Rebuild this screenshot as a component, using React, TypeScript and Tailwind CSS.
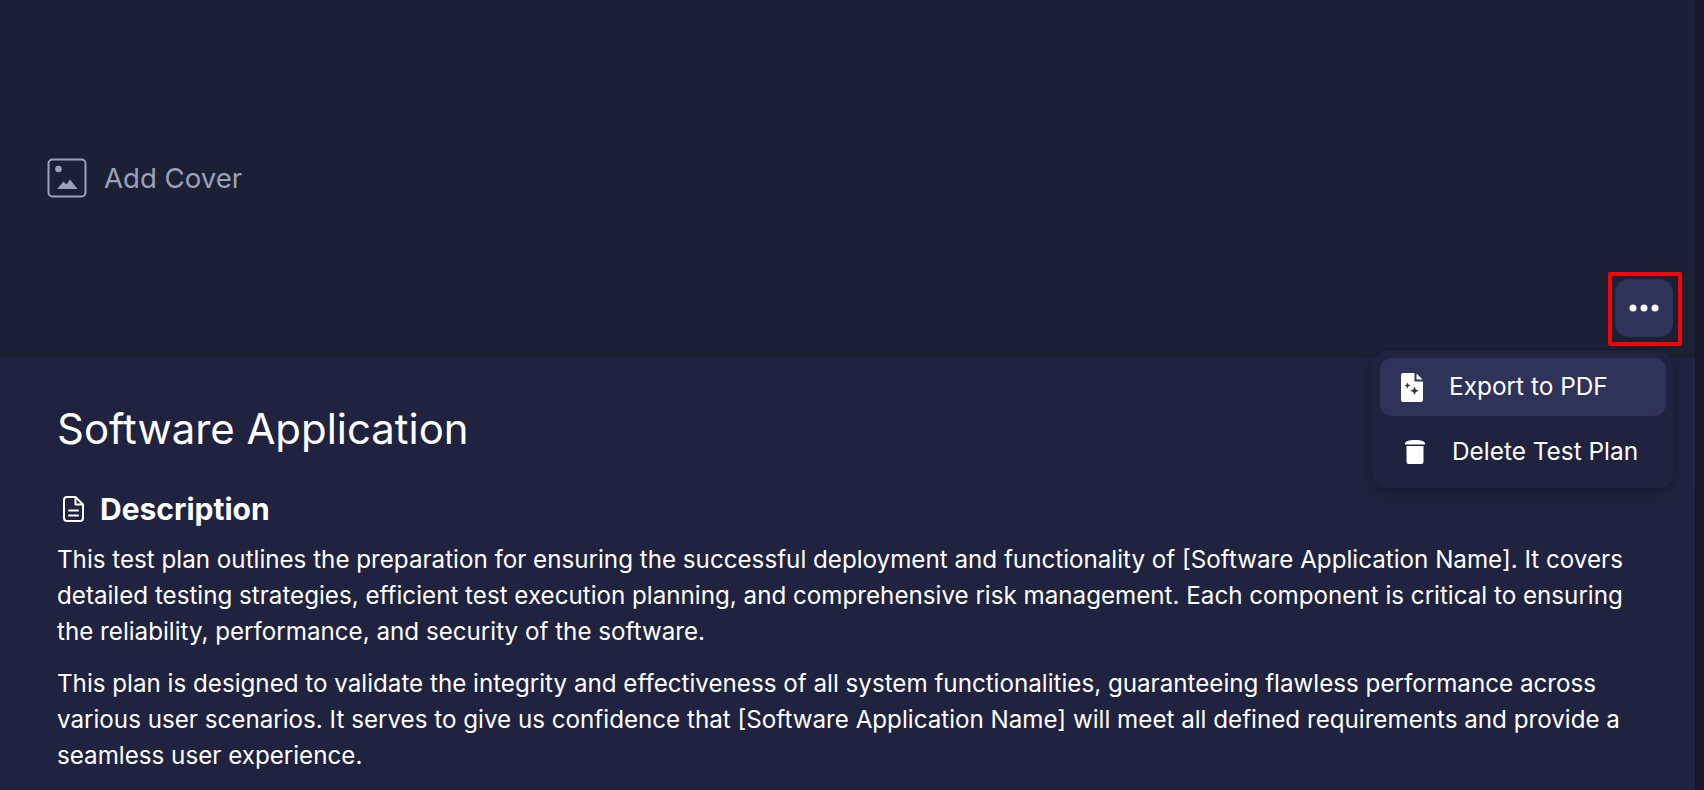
import React from "react";

function CoverIcon() {
  return (
    <svg width="40" height="40" viewBox="0 0 40 40" fill="none">
      <rect x="1.500" y="1.500" width="37" height="37" rx="4" stroke="#9ca1ba" strokeWidth="2" />
      <circle cx="11.500" cy="11" r="3.3" fill="#9ca1ba" />
      <path d="M10 31 L16.500 23.500 L19.500 26.500 L23 21.500 L30.500 31 Z" fill="#9ca1ba" />
    </svg>
  );
}

function PdfIcon() {
  return (
    <svg width="22" height="29" viewBox="0 0 22 29">
      <path fillRule="evenodd" fill="#fff" d="M2 0H13.500V8.500H22V27a2 2 0 0 1-2 2H2a2 2 0 0 1-2-2V2a2 2 0 0 1 2-2ZM6.500 9.500l.9 2.100 2.100.9-2.100.9-.9 2.100-.9-2.100-2.100-.9 2.100-.9ZM13.500 13.500l1.300 3 3 1.300-3 1.300-1.300 3-1.300-3-3-1.300 3-1.300Z" />
      <path fill="#fff" d="M15.500 0.500 21.500 6.500H15.500Z" />
    </svg>
  );
}

function TrashIcon() {
  return (
    <svg width="20" height="24" viewBox="0 0 20 24">
      <path fill="#fff" d="M0 3.500C0 1.500 4 0 10 0s10 1.500 10 3.500v1H0Z" />
      <path fill="#fff" d="M1.500 6h17v15.500a2.500 2.500 0 0 1-2.500 2.500H4a2.500 2.500 0 0 1-2.500-2.500Z" />
    </svg>
  );
}

function DocIcon() {
  return (
    <svg width="21" height="26" viewBox="0 0 21 26" fill="none" stroke="#fff" strokeWidth="2">
      <path d="M4 1h8.500L20 8.500V22a3 3 0 0 1-3 3H4a3 3 0 0 1-3-3V4a3 3 0 0 1 3-3Z" strokeLinejoin="round" />
      <path d="M12.500 1V8.500H20" strokeLinejoin="round" />
      <path d="M6 14.500h9M6 19.500h9" strokeLinecap="round" />
    </svg>
  );
}

function DotsIcon() {
  return (
    <svg width="30" height="8" viewBox="0 0 30 8" fill="#fff">
      <circle cx="4" cy="4" r="3.500" />
      <circle cx="15" cy="4" r="3.500" />
      <circle cx="26" cy="4" r="3.500" />
    </svg>
  );
}

export default function App() {
  return (
    <div className="h-[790px] w-[1704px] overflow-hidden flex bg-[#1f2340] text-white font-['Inter',sans-serif]">
      <div className="relative flex-1 min-w-0">
        <div className="h-[358px] bg-[#1b2035] flex items-center pl-[47px] relative">
          <div className="flex items-center gap-[17px] -mt-[1px]">
            <CoverIcon />
            <span className="text-[27.6px] text-[#9ca1ba]">Add Cover</span>
          </div>
          <div className="absolute left-[1608px] top-[272px] w-[74px] h-[74px] border-[4px] border-[#ff0000] rounded-[2px] flex items-center justify-center pr-[2px] pb-[2px]">
            <div className="w-[58px] h-[58px] rounded-[14px] bg-[#2f3359] flex items-center justify-center">
              <DotsIcon />
            </div>
          </div>
        </div>
        <div className="absolute left-[1372px] top-[351px] w-[301px] h-[137px] rounded-[14px] bg-[#1f2340] shadow-[0_4px_16px_rgba(0,0,0,0.3)] pl-[8px] pr-[7px] py-[7px]">
          <div className="h-[58px] rounded-[12px] bg-[#2f3359] flex items-center pl-[21px] gap-[26px] text-[24.4px]">
            <PdfIcon />
            <span className="mb-[2px]">Export to PDF</span>
          </div>
          <div className="h-[58px] mt-[7px] flex items-center pl-[25px] gap-[27px] text-[24.4px]">
            <TrashIcon />
            <span className="mb-[2px]">Delete Test Plan</span>
          </div>
        </div>
        <div className="pl-[57px] pr-[40px] pt-[43px]">
          <h1 className="text-[41.9px] leading-[56px] font-normal">Software Application</h1>
          <div className="flex items-center gap-[16px] mt-[34px] ml-[6px]">
            <DocIcon />
            <h2 className="text-[30px] leading-[36px] font-bold">Description</h2>
          </div>
          <p className="text-[24.18px] leading-[36px] mt-[15px]">
            This test plan outlines the preparation for ensuring the successful deployment and functionality of [Software Application Name]. It covers detailed testing strategies, efficient test execution planning, and comprehensive risk management. Each component is critical to ensuring the reliability, performance, and security of the software.
          </p>
          <p className="text-[24.18px] leading-[36px] mt-[16px]">
            This plan is designed to validate the integrity and effectiveness of all system functionalities, guaranteeing flawless performance across various user scenarios. It serves to give us confidence that [Software Application Name] will meet all defined requirements and provide a seamless user experience.
          </p>
        </div>
      </div>
      <div className="w-[9px] bg-[#17172a]" />
    </div>
  );
}
